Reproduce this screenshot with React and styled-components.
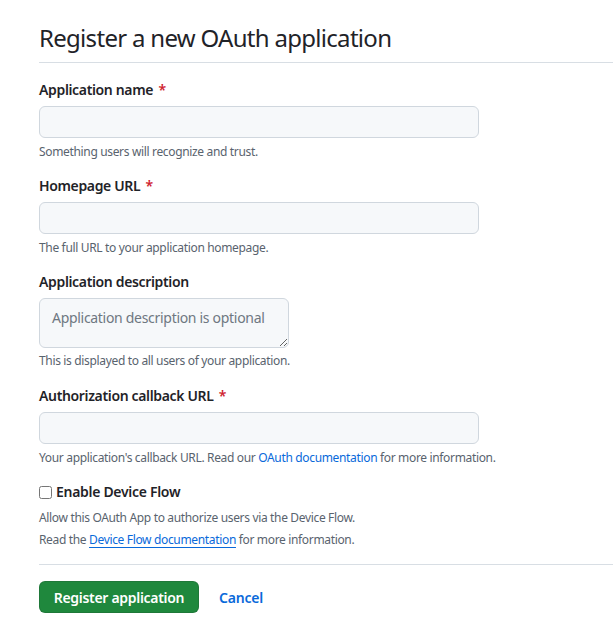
import React from "react";
import styled, {createGlobalStyle} from "styled-components";

const GlobalStyle = createGlobalStyle`
    body {
        margin: 0;
        background: #ffffff;
        color: #1f2328;
        font-family: "Noto Sans", "Open Sans", sans-serif;
    }
`

const Page = styled.div`
    padding: 20px 0 24px 39px;
`

const Header = styled.div`
    border-bottom: 1px solid #d8dee4;
    padding-bottom: 6px;
    margin-bottom: 17px;
`

const Title = styled.h2`
    margin: 0;
    font-size: 24px;
    font-weight: 400;
    line-height: 36px;
    letter-spacing: -0.7px;
`

const Form = styled.form`
    display: flex;
    flex-direction: column;
`

const Field = styled.div`
    display: flex;
    flex-direction: column;
    margin-bottom: ${props => props.$gap ?? 15}px;
`

const Label = styled.label`
    font-size: 14px;
    font-weight: 600;
    line-height: 20px;
    letter-spacing: -0.35px;
    margin-bottom: 6px;
`

const Required = styled.span`
    color: #cf222e;
    margin-left: 2px;
`

const TextInput = styled.input`
    box-sizing: border-box;
    width: 440px;
    height: 32px;
    padding: 5px 12px;
    font-size: 14px;
    font-family: inherit;
    background: #f6f8fa;
    border: 1px solid #d0d7de;
    border-radius: 6px;
    outline: none;
`

const TextArea = styled.textarea`
    box-sizing: border-box;
    width: 250px;
    height: 50px;
    padding: 9px 12px;
    font-size: 14px;
    line-height: 20px;
    letter-spacing: -0.3px;
    font-family: inherit;
    color: #1f2328;
    background: #f6f8fa;
    border: 1px solid #d0d7de;
    border-radius: 6px;
    outline: none;

    &::placeholder {
        color: #6e7781;
    }
`

const Note = styled.p`
    margin: ${props => props.$top ?? 5}px 0 0;
    font-size: 12px;
    line-height: 18px;
    letter-spacing: -0.34px;
    color: #59636e;
`

const Link = styled.a`
    color: #0969da;
    text-decoration: ${props => props.$underline ? "underline" : "none"};
    text-underline-offset: 3px;
`

const CheckLabel = styled.label`
    display: flex;
    align-items: center;
    gap: 4px;
    font-size: 14px;
    font-weight: 600;
    line-height: 20px;
    letter-spacing: -0.3px;
    margin-bottom: 7px;
`

const CheckBox = styled.input`
    width: 13px;
    height: 13px;
    margin: 0;
`

const Divider = styled.hr`
    border: none;
    border-top: 1px solid #d8dee4;
    margin: 15px 0 16px;
`

const Actions = styled.div`
    display: flex;
    align-items: center;
    gap: 20px;
`

const PrimaryButton = styled.button`
    box-sizing: border-box;
    width: 160px;
    height: 32px;
    background: #1f883d;
    color: #ffffff;
    border: 1px solid rgba(31, 35, 40, 0.15);
    border-radius: 6px;
    font-family: inherit;
    font-size: 14px;
    font-weight: 600;
    letter-spacing: -0.3px;
`

const CancelLink = styled.a`
    color: #0969da;
    font-size: 14px;
    font-weight: 600;
    letter-spacing: -0.2px;
`

function App() {
    return (
        <Page>
            <GlobalStyle/>
            <Header>
                <Title>Register a new OAuth application</Title>
            </Header>
            <Form>
                <Field>
                    <Label>Application name<Required> *</Required></Label>
                    <TextInput type="text"/>
                    <Note>Something users will recognize and trust.</Note>
                </Field>
                <Field>
                    <Label>Homepage URL<Required> *</Required></Label>
                    <TextInput type="text"/>
                    <Note>The full URL to your application homepage.</Note>
                </Field>
                <Field $gap={16}>
                    <Label>Application description</Label>
                    <TextArea placeholder="Application description is optional"/>
                    <Note $top={4}>This is displayed to all users of your application.</Note>
                </Field>
                <Field>
                    <Label>Authorization callback URL<Required> *</Required></Label>
                    <TextInput type="text"/>
                    <Note>
                        Your application's callback URL. Read our <Link>OAuth documentation</Link> for more information.
                    </Note>
                </Field>
                <CheckLabel>
                    <CheckBox type="checkbox"/>
                    Enable Device Flow
                </CheckLabel>
                <Note $top={0}>Allow this OAuth App to authorize users via the Device Flow.</Note>
                <Note $top={4}>Read the <Link $underline>Device Flow documentation</Link> for more information.</Note>
            </Form>
            <Divider/>
            <Actions>
                <PrimaryButton>Register application</PrimaryButton>
                <CancelLink>Cancel</CancelLink>
            </Actions>
        </Page>
    );
}

export default App;
